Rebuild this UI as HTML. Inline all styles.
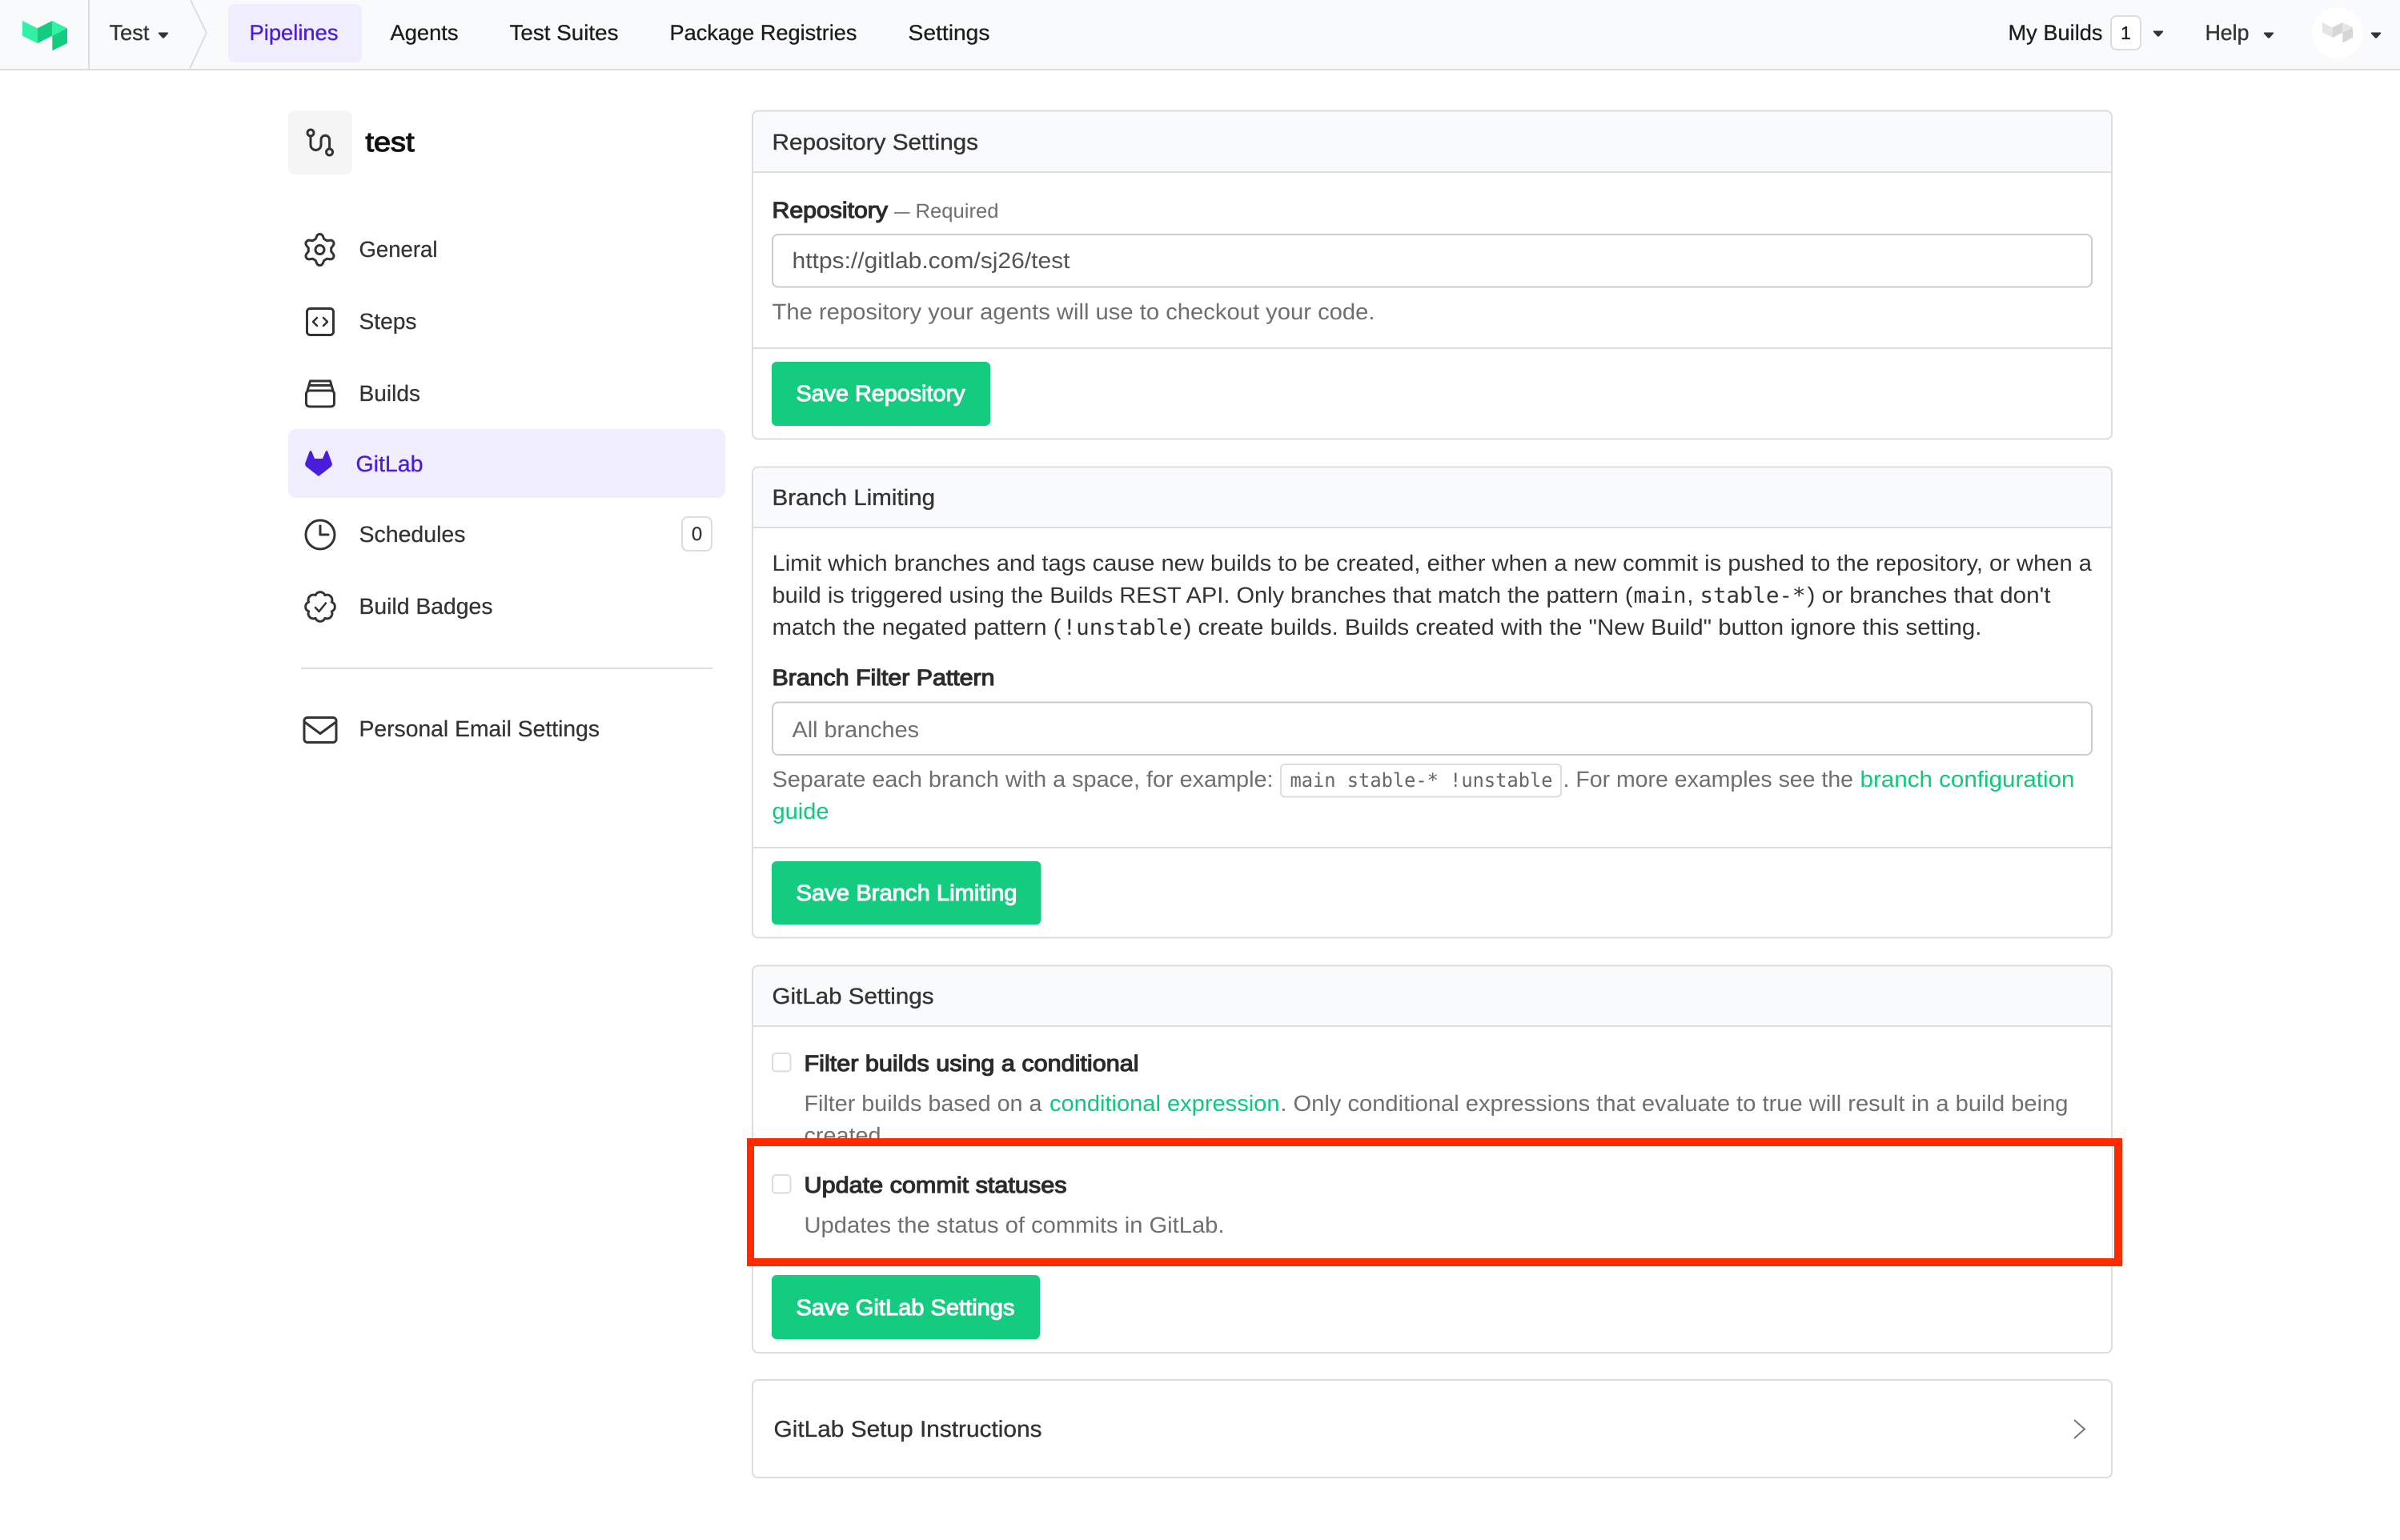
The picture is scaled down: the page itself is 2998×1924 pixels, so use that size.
<!DOCTYPE html>
<html><head><meta charset="utf-8"><title>GitLab Settings</title>
<style>
html,body{margin:0;padding:0;background:#fff;width:2998px;height:1924px;overflow:hidden}
svg{display:block}
text{font-family:"Liberation Sans",sans-serif;font-size:28px;fill:#333;text-rendering:geometricPrecision;white-space:pre;transform:translateX(-.5px)}
.n{fill:#1c1c1c;stroke:#1c1c1c;stroke-width:.3px}
.s{fill:#333;stroke:#333;stroke-width:.25px}
.h{fill:#333;stroke:#333;stroke-width:.35px}
.g{fill:#6f6f6f}
.l{fill:#0dc97c}
.b{fill:#2b2b2b;stroke:#2b2b2b;stroke-width:1.15px}
.w{fill:#fff;stroke:#fff;stroke-width:1px}
.p{fill:#4a1ddb;stroke:#4a1ddb;stroke-width:.35px}
.m{font-family:"DejaVu Sans Mono",monospace;font-size:27px}
.c{font-family:"DejaVu Sans Mono",monospace;font-size:24px;fill:#666}
.i{fill:none;stroke:#333;stroke-width:3;stroke-linecap:round;stroke-linejoin:round}
</style></head>
<body>
<svg xmlns="http://www.w3.org/2000/svg" width="2998" height="1924" viewBox="0 0 2998 1924">
<rect width="2998" height="1924" fill="#fff"/>

<!-- top nav -->
<rect width="2998" height="86" fill="#f9fafc"/>
<rect y="86" width="2998" height="2" fill="#ddd"/>
<polygon points="28,26 46.7,35.3 46.7,54 28,44.7" fill="#30f2a2"/>
<polygon points="46.7,35.3 65.3,26 65.3,44.7 46.7,54" fill="#14cc80"/>
<polygon points="65.3,26 84,35.3 65.3,44.7" fill="#30f2a2"/>
<polygon points="84,35.3 84,54 65.3,63.3 65.3,44.7" fill="#14cc80"/>
<rect x="110" y="0" width="2" height="86" fill="#ddd"/>
<path d="M238 0 L258 41 L237 86" fill="none" stroke="#ddd" stroke-width="2"/>
<text x="137" y="50" textLength="50" lengthAdjust="spacingAndGlyphs" class="h" style="font-size:27px">Test</text>
<path d="M199 40.5h10q2 0 .8 1.6l-4.5 5q-1.3 1.3-2.6 0l-4.5-5q-1.2-1.6 .8-1.6z" fill="#333"/>
<rect x="285" y="5" width="167" height="73" rx="8" fill="#f0edfe"/>
<text x="312" y="50" textLength="111" lengthAdjust="spacingAndGlyphs" class="p" style="font-size:27px">Pipelines</text>
<text x="488" y="50" textLength="85" lengthAdjust="spacingAndGlyphs" class="n" style="font-size:27px">Agents</text>
<text x="637" y="50" textLength="136" lengthAdjust="spacingAndGlyphs" class="n" style="font-size:27px">Test Suites</text>
<text x="837" y="50" textLength="234" lengthAdjust="spacingAndGlyphs" class="n" style="font-size:27px">Package Registries</text>
<text x="1135" y="50" textLength="102" lengthAdjust="spacingAndGlyphs" class="n" style="font-size:27px">Settings</text>

<text x="2509" y="50" textLength="118" lengthAdjust="spacingAndGlyphs" class="n" style="font-size:27px">My Builds</text>
<rect x="2637" y="20" width="37" height="42" rx="7" fill="#fff" stroke="#ddd" stroke-width="2"/>
<text x="2656" y="49" text-anchor="middle" style="font-size:23px" class="n">1</text>
<path d="M2691 38.5h10q2 0 .8 1.6l-4.5 5q-1.3 1.3-2.6 0l-4.5-5q-1.2-1.6 .8-1.6z" fill="#333"/>
<text x="2755" y="50" textLength="55" lengthAdjust="spacingAndGlyphs" class="h" style="font-size:27px">Help</text>
<path d="M2829 40.5h10q2 0 .8 1.6l-4.5 5q-1.3 1.3-2.6 0l-4.5-5q-1.2-1.6 .8-1.6z" fill="#333"/>
<circle cx="2920" cy="41" r="32" fill="#fff"/>
<polygon points="2901,28 2913.7,34.3 2913.7,47 2901,40.7" fill="#e6e6e6"/>
<polygon points="2913.7,34.3 2926.3,28 2926.3,40.7 2913.7,47" fill="#d6d6d6"/>
<polygon points="2926.3,28 2939,34.3 2926.3,40.7" fill="#e6e6e6"/>
<polygon points="2939,34.3 2939,47 2926.3,53.3 2926.3,40.7" fill="#d6d6d6"/>
<path d="M2963 40.5h10q2 0 .8 1.6l-4.5 5q-1.3 1.3-2.6 0l-4.5-5q-1.2-1.6 .8-1.6z" fill="#333"/>

<!-- sidebar -->
<rect x="360" y="138" width="80" height="80" rx="9" fill="#f5f5f5"/>
<circle cx="388" cy="166" r="4" class="i"/>
<circle cx="411.6" cy="190" r="4" class="i"/>
<path class="i" d="M388 170V181a6.5 6.5 0 0 0 13 0V174.5a5.3 5.3 0 0 1 10.6 0V186"/>
<text x="457" y="189" textLength="61" lengthAdjust="spacingAndGlyphs" class="b" style="font-size:34px;fill:#111;stroke:#111;stroke-width:1.2px">test</text>

<g transform="translate(399.5 312)">
<path class="i" d="M-5.2-13.5L-3.7-17.3A4.2 4.2 0 0 1 3.7-17.3L5.2-13.5L9-11.2L13-11.9A4.2 4.2 0 0 1 16.8-5.4L14.2-2.2V2.2L16.8 5.4A4.2 4.2 0 0 1 13 11.9L9 11.2L5.2 13.5L3.7 17.3A4.2 4.2 0 0 1-3.7 17.3L-5.2 13.5L-9 11.2L-13 11.9A4.2 4.2 0 0 1-16.8 5.4L-14.2 2.2V-2.2L-16.8-5.4A4.2 4.2 0 0 1-13-11.9L-9-11.2Z"/>
<circle r="5.5" class="i"/>
</g>
<text x="449" y="321" textLength="98" lengthAdjust="spacingAndGlyphs" class="s">General</text>

<rect x="383.5" y="385.5" width="33" height="33" rx="4" class="i"/>
<path class="i" style="stroke-width:2.5" d="M396 397l-5 5 5 5M404 397l5 5-5 5"/>
<text x="449" y="411" textLength="72" lengthAdjust="spacingAndGlyphs" class="s">Steps</text>

<rect x="382.5" y="488" width="35" height="20" rx="4" class="i"/>
<path class="i" d="M384 488L387.5 476H412.5L416 488M386 481.5H414"/>
<text x="449" y="501" textLength="76.5" lengthAdjust="spacingAndGlyphs" class="s">Builds</text>

<rect x="360" y="536" width="546" height="86" rx="10" fill="#f0edfe"/>
<path fill="#4a1ddb" d="M398 595L382.5 583Q380.5 581 381.5 578L386.5 564.5Q388 561.5 389.5 564.5L393 573H403L406.5 564.5Q408 561.5 409.5 564.5L414.5 578Q415.5 581 413.5 583Z"/>
<text x="445" y="589" textLength="84" lengthAdjust="spacingAndGlyphs" class="p">GitLab</text>

<circle cx="400" cy="668" r="18" class="i"/>
<path class="i" d="M400 657V668H410"/>
<text x="449" y="677" textLength="133" lengthAdjust="spacingAndGlyphs" class="s">Schedules</text>
<rect x="852" y="646" width="37" height="42" rx="7" fill="#fff" stroke="#ddd" stroke-width="2"/>
<text x="871" y="675" text-anchor="middle" style="font-size:24px" class="s">0</text>

<path class="i" d="M405.9 743.7A6.3 6.3 0 0 1 414.3 752.1A6.3 6.3 0 0 1 414.3 763.9A6.3 6.3 0 0 1 405.9 772.3A6.3 6.3 0 0 1 394.1 772.3A6.3 6.3 0 0 1 385.7 763.9A6.3 6.3 0 0 1 385.7 752.1A6.3 6.3 0 0 1 394.1 743.7A6.3 6.3 0 0 1 405.9 743.7Z"/>
<path class="i" style="stroke-width:2.5" d="M394 759l4.5 5 8.5-10.5"/>
<text x="449" y="767" textLength="167" lengthAdjust="spacingAndGlyphs" class="s">Build Badges</text>

<rect x="376" y="834" width="514" height="2" fill="#ddd"/>

<rect x="380" y="896.5" width="40" height="31" rx="4" class="i"/>
<path class="i" d="M381 902.5L400 916.5L419 902.5"/>
<text x="449" y="920" textLength="300.5" lengthAdjust="spacingAndGlyphs" class="s">Personal Email Settings</text>

<!-- card 1 -->
<rect x="940" y="138.5" width="1698" height="410" rx="7" fill="#fff" stroke="#ddd" stroke-width="2"/>
<path d="M941 215V146a6 6 0 0 1 6-6H2631a6 6 0 0 1 6 6V215Z" fill="#f9fafc"/>
<rect x="940" y="214" width="1698" height="2" fill="#ddd"/>
<text x="965" y="187" textLength="257.5" lengthAdjust="spacingAndGlyphs" class="h">Repository Settings</text>
<text x="965" y="272" textLength="144.5" lengthAdjust="spacingAndGlyphs" class="b">Repository</text>
<text x="1117.5" y="272" textLength="19.5" lengthAdjust="spacingAndGlyphs" class="g" style="font-size:24px">—</text>
<text x="1144" y="272" textLength="104" lengthAdjust="spacingAndGlyphs" class="g" style="font-size:25px">Required</text>
<rect x="965" y="293" width="1648" height="65.5" rx="7" fill="#fff" stroke="#ccc" stroke-width="2"/>
<text x="990" y="335" textLength="347" lengthAdjust="spacingAndGlyphs" style="fill:#555">https://gitlab.com/sj26/test</text>
<text x="965" y="399" textLength="753" lengthAdjust="spacingAndGlyphs" class="g">The repository your agents will use to checkout your code.</text>
<rect x="940" y="434" width="1698" height="2" fill="#ddd"/>
<rect x="964" y="452" width="273" height="80" rx="6" fill="#14cc80"/>
<text x="995" y="501" textLength="211" lengthAdjust="spacingAndGlyphs" class="w">Save Repository</text>

<!-- card 2 -->
<rect x="940" y="583.5" width="1698" height="588" rx="7" fill="#fff" stroke="#ddd" stroke-width="2"/>
<path d="M941 659V591a6 6 0 0 1 6-6H2631a6 6 0 0 1 6 6V659Z" fill="#f9fafc"/>
<rect x="940" y="658" width="1698" height="2" fill="#ddd"/>
<text x="965" y="631" textLength="203.5" lengthAdjust="spacingAndGlyphs" class="h">Branch Limiting</text>
<text x="965" y="713" textLength="1648.5" lengthAdjust="spacingAndGlyphs">Limit which branches and tags cause new builds to be created, either when a new commit is pushed to the repository, or when a</text>
<text x="965" y="753" textLength="1075" lengthAdjust="spacingAndGlyphs">build is triggered using the Builds REST API. Only branches that match the pattern (</text>
<text x="2041" y="753" textLength="66" lengthAdjust="spacingAndGlyphs" class="m">main</text>
<text x="2108" y="753">,</text>
<text x="2124" y="753" textLength="132" lengthAdjust="spacingAndGlyphs" class="m">stable-*</text>
<text x="2258" y="753" textLength="304" lengthAdjust="spacingAndGlyphs">) or branches that don't</text>
<text x="965" y="793" textLength="361" lengthAdjust="spacingAndGlyphs">match the negated pattern (</text>
<text x="1328" y="793" textLength="149.5" lengthAdjust="spacingAndGlyphs" class="m">!unstable</text>
<text x="1479" y="793" textLength="997" lengthAdjust="spacingAndGlyphs">) create builds. Builds created with the "New Build" button ignore this setting.</text>
<text x="965" y="856" textLength="278" lengthAdjust="spacingAndGlyphs" class="b">Branch Filter Pattern</text>
<rect x="965" y="877.5" width="1648" height="65.5" rx="7" fill="#fff" stroke="#ccc" stroke-width="2"/>
<text x="990" y="921" textLength="158.5" lengthAdjust="spacingAndGlyphs" class="g">All branches</text>
<text x="965" y="983" textLength="626" lengthAdjust="spacingAndGlyphs" class="g">Separate each branch with a space, for example:</text>
<rect x="1600" y="955" width="350" height="40.5" rx="5" fill="#fff" stroke="#ddd" stroke-width="2"/>
<text x="1612" y="983" textLength="328" lengthAdjust="spacingAndGlyphs" class="c">main stable-* !unstable</text>
<text x="1953" y="983" textLength="362.5" lengthAdjust="spacingAndGlyphs" class="g">. For more examples see the</text>
<text x="2324" y="983" textLength="268" lengthAdjust="spacingAndGlyphs" class="l">branch configuration</text>
<text x="965" y="1023" textLength="71" lengthAdjust="spacingAndGlyphs" class="l">guide</text>
<rect x="940" y="1058" width="1698" height="2" fill="#ddd"/>
<rect x="964" y="1076" width="336.5" height="79" rx="6" fill="#14cc80"/>
<text x="995" y="1125" textLength="276" lengthAdjust="spacingAndGlyphs" class="w">Save Branch Limiting</text>

<!-- card 3 -->
<rect x="940" y="1206.5" width="1698" height="483.5" rx="7" fill="#fff" stroke="#ddd" stroke-width="2"/>
<path d="M941 1282V1214a6 6 0 0 1 6-6H2631a6 6 0 0 1 6 6V1282Z" fill="#f9fafc"/>
<rect x="940" y="1281" width="1698" height="2" fill="#ddd"/>
<text x="965" y="1254" textLength="202" lengthAdjust="spacingAndGlyphs" class="h">GitLab Settings</text>
<rect x="965" y="1316" width="22.5" height="22.5" rx="4" fill="#fff" stroke="#ddd" stroke-width="2"/>
<text x="1005" y="1338" textLength="418" lengthAdjust="spacingAndGlyphs" class="b">Filter builds using a conditional</text>
<text x="1005" y="1388" textLength="297" lengthAdjust="spacingAndGlyphs" class="g">Filter builds based on a</text>
<text x="1311.5" y="1388" textLength="287.5" lengthAdjust="spacingAndGlyphs" class="l">conditional expression</text>
<text x="1600" y="1388" class="g">.</text>
<text x="1616" y="1388" textLength="968" lengthAdjust="spacingAndGlyphs" class="g">Only conditional expressions that evaluate to true will result in a build being</text>
<text x="1005" y="1428" textLength="96" lengthAdjust="spacingAndGlyphs" class="g">created</text>

<!-- highlighted region -->
<rect x="942" y="1432" width="1696" height="140" fill="#fff"/>
<rect x="965" y="1468" width="22.5" height="22.5" rx="4" fill="#fff" stroke="#ddd" stroke-width="2"/>
<text x="1005" y="1490" textLength="328" lengthAdjust="spacingAndGlyphs" class="b">Update commit statuses</text>
<text x="1005" y="1540" textLength="525" lengthAdjust="spacingAndGlyphs" class="g">Updates the status of commits in GitLab.</text>
<path fill="#ff2a00" fill-rule="evenodd" d="M933 1422H2651V1582H933ZM942 1432V1572H2641V1432Z"/>

<rect x="964" y="1593" width="335" height="80" rx="6" fill="#14cc80"/>
<text x="995" y="1643" textLength="273" lengthAdjust="spacingAndGlyphs" class="w">Save GitLab Settings</text>

<!-- card 4 -->
<rect x="940" y="1724" width="1698" height="122" rx="7" fill="#fff" stroke="#ddd" stroke-width="2"/>
<text x="967" y="1795" textLength="335" lengthAdjust="spacingAndGlyphs" class="h" style="font-size:28.5px">GitLab Setup Instructions</text>
<path d="M2591 1774L2604 1785.5L2591 1797" fill="none" stroke="#777" stroke-width="2"/>
</svg>
</body></html>
